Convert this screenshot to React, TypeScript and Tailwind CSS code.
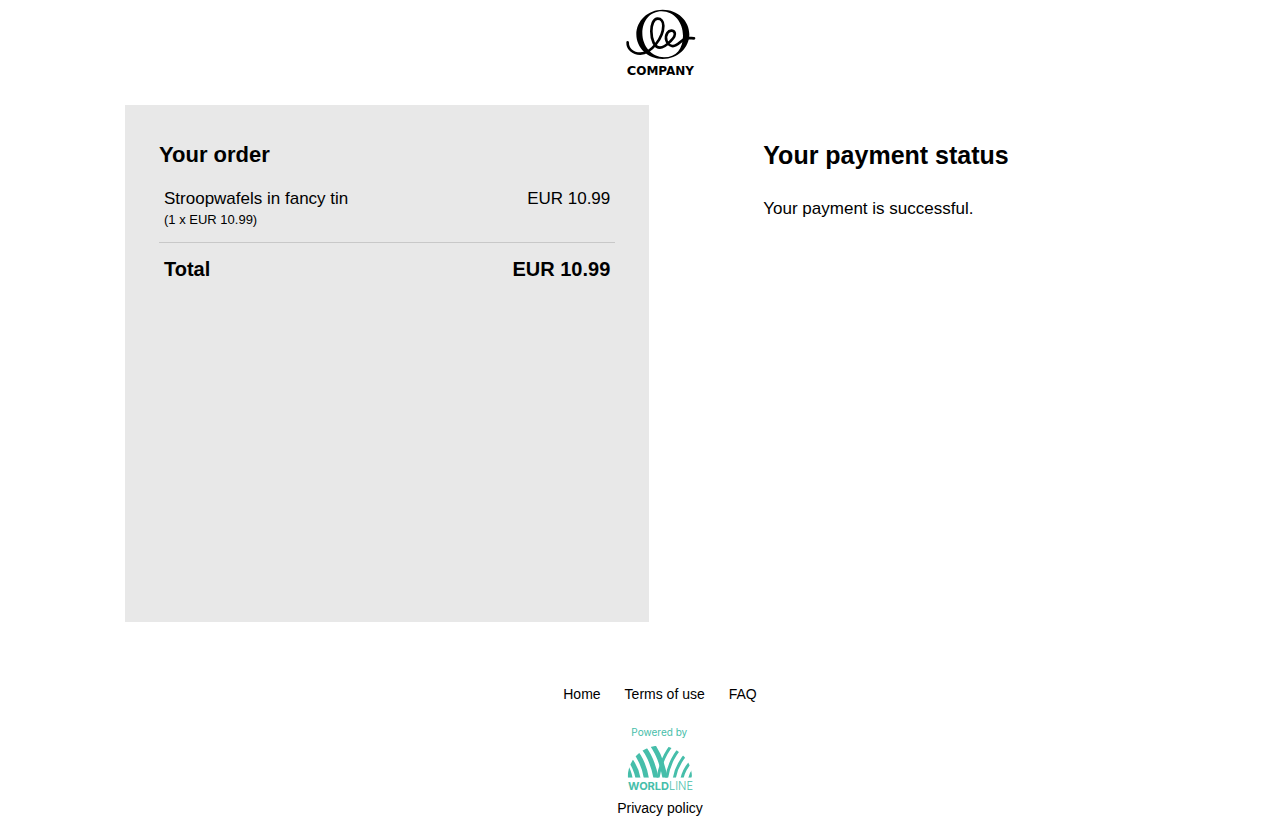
import React from 'react';

interface OrderItem {
  name: string;
  detail: string;
  amount: string;
}

const items: OrderItem[] = [
  { name: 'Stroopwafels in fancy tin', detail: '(1 x EUR 10.99)', amount: 'EUR 10.99' },
];

const links = ['Home', 'Terms of use', 'FAQ'];

const CompanyLogo: React.FC = () => (
  <svg width="90" height="85" viewBox="0 0 270 255" role="img" aria-label="Company">
    {/* ring, thick at the sides */}
    <path
      fillRule="evenodd"
      d="M143 29C188 29 223 62 223 103S188 177 143 177S64 144 64 103S99 29 143 29ZM140 34C106 34 82 62 82 100S110 172 147 172S204 146 204 107S178 34 140 34Z"
    />
    {/* script letters */}
    <path
      d="M38 127C37 146 53 161 76 161C109 161 145 112 145 77C145 64 138 56 128 56C115 56 109 75 109 94C109 121 119 143 135 143C148 143 158 132 167 123C177 113 182 106 179 98C175 89 163 90 157 99C149 111 153 134 171 138C187 142 197 120 213 115C221 113 229 115 237 115"
      fill="none"
      stroke="black"
      strokeWidth="8"
      strokeLinecap="round"
    />
    <text x="35" y="225" fontFamily="DejaVu Sans" fontWeight="bold" fontSize="39">
      C<tspan fontSize="36">OMPANY</tspan>
    </text>
  </svg>
);

const WorldlineLogo: React.FC = () => (
  <svg width="100" height="72" viewBox="0 0 300 216" role="img" aria-label="Powered by Worldline">
    <defs>
      <clipPath id="dome">
        <path d="M53 173C53 118 96 77 149 77S246 118 246 173Z" />
      </clipPath>
    </defs>
    <g fill="#46beaa" fontFamily="Inter">
      <text x="64" y="48" fontSize="30">Powered by</text>
      <text x="54" y="210" fontSize="33" fontWeight="bold">
        WORLD<tspan fontWeight="300">LINE</tspan>
      </text>
    </g>
    <g clipPath="url(#dome)" fill="none" stroke="#46beaa">
      <g strokeWidth="15">
        <path d="M42 132Q57 150 61 180" />
        <path d="M50 108Q78 136 85 180" />
        <path d="M68 86Q101 120 110 180" />
        <path d="M88 68Q127 108 139 180" />
        <path d="M116 60Q154 104 166 180" />
      </g>
      <g strokeWidth="9">
        <path d="M190 70Q153 112 143 180" />
        <path d="M214 80Q177 120 169 180" />
        <path d="M233 98Q199 132 192 180" />
        <path d="M248 120Q221 146 215 180" />
        <path d="M256 144Q242 158 238 180" />
      </g>
    </g>
  </svg>
);

const OrderSummary: React.FC = () => (
  <section className="w-[49%] min-h-[517px] bg-[#e8e8e8] px-[34px] pt-9">
    <h2 className="text-[22px] leading-7 font-bold">Your order</h2>
    <table className="mt-4 w-full border-collapse">
      <tbody>
        {items.map((item) => (
          <tr key={item.name} className="border-b border-[#c8c8c8] align-top">
            <td className="px-[5px] pt-0.5 pb-[13px] text-[17px] leading-6">
              {item.name}
              <div className="text-[13px] leading-[18px]">{item.detail}</div>
            </td>
            <td className="px-[5px] pt-0.5 pb-[13px] text-right text-[17px] leading-6">{item.amount}</td>
          </tr>
        ))}
        <tr className="text-xl font-bold">
          <th scope="row" className="px-[5px] py-3 text-left">Total</th>
          <td className="px-[5px] py-3 text-right">EUR 10.99</td>
        </tr>
      </tbody>
    </table>
  </section>
);

const PaymentStatus: React.FC = () => (
  <section className="flex-1 pt-9 pl-[114px]">
    <h1 className="text-[25px] leading-7 font-bold">Your payment status</h1>
    <p className="mt-7 text-[17px] leading-6">Your payment is successful.</p>
  </section>
);

export default function App() {
  return (
    <div className="bg-white pr-[88px] pl-[125px] font-['Liberation_Sans',Arial,sans-serif] text-black">
      <header className="flex justify-center pb-5">
        <CompanyLogo />
      </header>
      <main className="flex">
        <OrderSummary />
        <PaymentStatus />
      </main>
      <footer className="flex flex-col items-center pt-[62px] text-sm">
        <nav className="flex gap-6">
          {links.map((label) => (
            <a key={label} href="#">{label}</a>
          ))}
        </nav>
        <div className="mt-4">
          <WorldlineLogo />
        </div>
        <a href="#" className="mt-1.5">Privacy policy</a>
      </footer>
    </div>
  );
}
